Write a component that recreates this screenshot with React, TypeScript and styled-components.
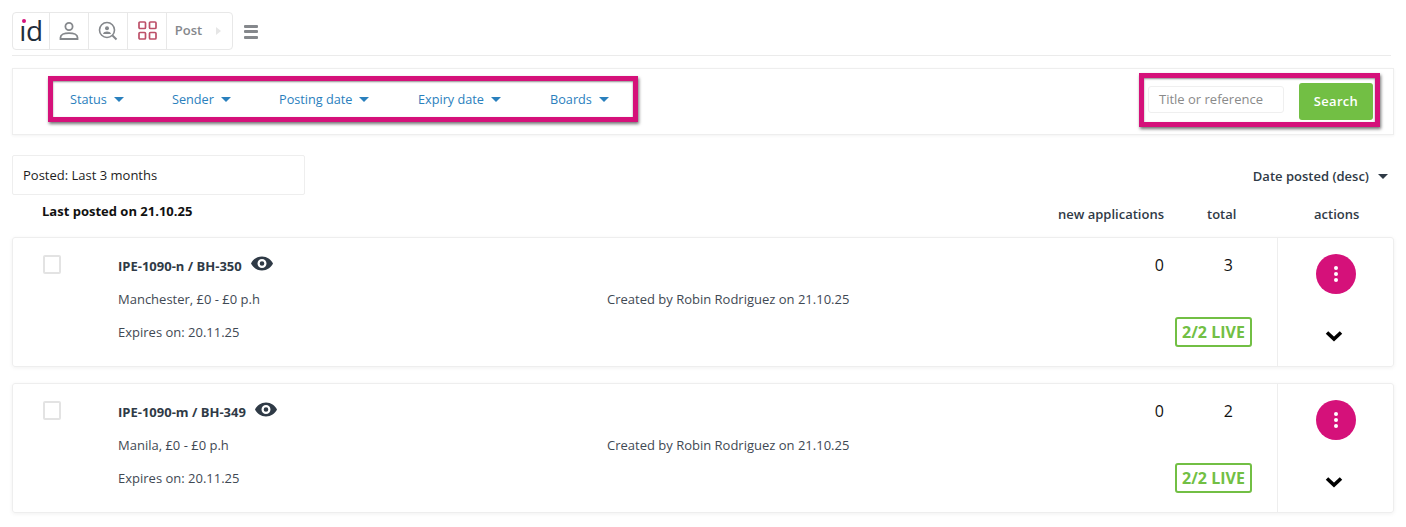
import React from "react";
import styled, { createGlobalStyle } from "styled-components";

const Global = createGlobalStyle`
  html, body { margin: 0; padding: 0; background: #fff; }
  body { font-family: "Open Sans", "Liberation Sans", sans-serif; color: #2f3a46; }
  * { box-sizing: border-box; }
`;

const Page = styled.div`
  width: 1406px;
  height: 527px;
  overflow: hidden;
  padding: 12px 12px 0 12px;
`;

const TopBar = styled.div`
  display: flex;
  align-items: center;
  height: 44px;
  padding-bottom: 6px;
  border-bottom: 1px solid #ebebeb;
  margin-right: 3px;
`;

const Tools = styled.div`
  display: flex;
  height: 38px;
  width: 221px;
  border: 1px solid #e8e8e8;
  border-radius: 4px;
`;

const Tool = styled.div<{ $w: number; $last?: boolean }>`
  position: relative;
  width: ${(p) => p.$w}px;
  display: flex;
  align-items: center;
  justify-content: center;
  border-right: ${(p) => (p.$last ? "none" : "1px solid #e8e8e8")};
`;

const Logo = styled.span`
  font-size: 28px;
  font-weight: 500;
  letter-spacing: -0.3px;
  line-height: 1;
  color: #1f2d3a;
  margin-top: -2px;
`;

const LogoDot = styled.i`
  position: absolute;
  left: 9px;
  top: 6px;
  width: 4px;
  height: 4px;
  border-radius: 50%;
  background: #d5117a;
`;

const PostLabel = styled.span`
  font-size: 13px;
  font-weight: 600;
  color: #85888c;
  margin-right: 22px;
  margin-top: -1px;
`;

const Caret = styled.i`
  position: absolute;
  right: 11px;
  top: 14px;
  border-left: 5px solid #e6e6e6;
  border-top: 4px solid transparent;
  border-bottom: 4px solid transparent;
`;

const Hamburger = styled.div`
  width: 14px;
  height: 14px;
  margin: 2px 0 0 11px;
  display: flex;
  flex-direction: column;
  justify-content: space-between;
  i {
    display: block;
    height: 3px;
    background: #85888c;
    border-radius: 1px;
  }
`;

const FilterPanel = styled.div`
  display: flex;
  align-items: center;
  justify-content: space-between;
  height: 67px;
  margin-top: 12px;
  padding: 0 13px 0 35px;
  border: 1px solid #eeeeee;
  box-shadow: 0 1px 3px rgba(0, 0, 0, 0.05);
`;

const Marked = styled.div`
  display: flex;
  align-items: center;
  border: 5px solid #d5117a;
  box-shadow: 1px 2px 3px rgba(0, 0, 0, 0.55), inset 0 1px 2px rgba(0, 0, 0, 0.45);
  background: #fff;
`;

const FilterBox = styled(Marked)`
  width: 590px;
  height: 46px;
  margin-top: -6px;
  padding: 1px 0 0 17px;
`;

const Filter = styled.div<{ $w: number }>`
  flex: none;
  width: ${(p) => p.$w}px;
  display: flex;
  align-items: center;
  gap: 7px;
  font-size: 12.7px;
  color: #2a80bd;
`;

const BlueArrow = styled.i`
  border-top: 5px solid #2a80bd;
  border-left: 5.5px solid transparent;
  border-right: 5.5px solid transparent;
  margin-top: 1px;
`;

const SearchBox = styled(Marked)`
  width: 241px;
  height: 54px;
  margin-top: -3px;
  padding-left: 4px;
`;

const SearchInput = styled.div`
  width: 136px;
  height: 27px;
  border: 1px solid #efefef;
  border-radius: 3px;
  padding-left: 10px;
  font-size: 13px;
  line-height: 25px;
  color: #8a8a8a;
  margin-top: -1px;
`;

const SearchButton = styled.div`
  width: 74px;
  height: 37px;
  margin: 2px 0 0 15px;
  background: #72bf44;
  border-radius: 3px;
  color: #fff;
  font-size: 13px;
  font-weight: 600;
  letter-spacing: 0.3px;
  display: flex;
  align-items: center;
  justify-content: center;
`;

const SortRow = styled.div`
  display: flex;
  justify-content: space-between;
  align-items: flex-end;
  margin-top: 20px;
`;

const PostedBox = styled.div`
  width: 293px;
  height: 40px;
  border: 1px solid #eeeeee;
  border-radius: 2px;
  padding-left: 10px;
  font-size: 13px;
  line-height: 38px;
  color: #1d1d1d;
`;

const Sort = styled.div`
  display: flex;
  align-items: center;
  gap: 9px;
  font-size: 13px;
  font-weight: 600;
  padding: 0 6px 10px 0;
`;

const DarkArrow = styled.i`
  border-top: 5px solid #2f3a46;
  border-left: 5.5px solid transparent;
  border-right: 5.5px solid transparent;
`;

const HeadRow = styled.div`
  display: flex;
  align-items: flex-start;
  height: 42px;
  padding: 7px 0 0 30px;
`;

const LastPosted = styled.div`
  flex: 1;
  font-size: 13px;
  font-weight: 700;
  color: #111;
  line-height: 18px;
`;

const HeadCell = styled.div<{ $w: number }>`
  flex: none;
  width: ${(p) => p.$w}px;
  font-size: 13px;
  font-weight: 600;
  line-height: 18px;
  margin-top: 3px;
  white-space: nowrap;
`;

const Card = styled.div`
  display: flex;
  height: 130px;
  margin-bottom: 16px;
  border: 1px solid #eeeeee;
  border-radius: 3px;
  box-shadow: 0 1px 4px rgba(0, 0, 0, 0.06);
`;

const CheckCol = styled.div`
  width: 105px;
  padding: 17px 0 0 30px;
`;

const Check = styled.div`
  width: 18px;
  height: 19px;
  border: 2px solid #e3e3e3;
  border-radius: 2px;
`;

const InfoCol = styled.div`
  width: 489px;
  padding-top: 18px;
  display: flex;
  flex-direction: column;
  gap: 13px;
`;

const TitleLine = styled.div`
  height: 20px;
  display: flex;
  align-items: center;
  gap: 9px;
  font-size: 13px;
  font-weight: 700;
  color: #2f3a46;
`;

const Line = styled.div`
  height: 20px;
  font-size: 13px;
  line-height: 20px;
  color: #3f4954;
`;

const CreatedCol = styled.div`
  flex: 1;
  padding-top: 51px;
`;

const StatsCol = styled.div`
  width: 200px;
  display: flex;
  flex-direction: column;
  align-items: flex-end;
  justify-content: space-between;
  padding: 16px 25px 19px 0;
`;

const Numbers = styled.div`
  display: flex;
  width: 100%;
  font-size: 16px;
  line-height: 22px;
  color: #111;
`;

const Count = styled.div<{ $w: number }>`
  width: ${(p) => p.$w}px;
  text-align: right;
`;

const Live = styled.div`
  width: 77px;
  height: 30px;
  border: 2px solid #72bf44;
  border-radius: 3px;
  color: #72bf44;
  font-size: 16px;
  font-weight: 700;
  line-height: 26px;
  text-align: center;
  white-space: nowrap;
`;

const ActionsCol = styled.div`
  width: 116px;
  border-left: 1px solid #eeeeee;
  padding: 16px 0 0 38px;
`;

const Round = styled.div`
  width: 40px;
  height: 40px;
  border-radius: 50%;
  background: #d5117a;
  display: flex;
  flex-direction: column;
  align-items: center;
  justify-content: center;
  gap: 2px;
  i {
    width: 4px;
    height: 4px;
    border-radius: 50%;
    background: #fff;
  }
`;

const Chevron = styled.svg`
  display: block;
  width: 18px;
  height: 12px;
  margin: 36px 0 0 9px;
`;

const EyeIcon = () => (
  <svg width="22" height="15" viewBox="0 0 22 15" style={{ marginTop: -5 }}>
    <path
      fill="#2f3a46"
      fillRule="evenodd"
      d="M11 .5C6 .5 2 3.500 0 7.500c2 4 6 7 11 7s9-3 11-7c-2-4-6-7-11-7zM11 12a4.500 4.500 0 1 1 0-9 4.500 4.500 0 0 1 0 9zm0-2.200a2.300 2.300 0 1 0 0-4.600 2.300 2.300 0 0 0 0 4.600z"
    />
  </svg>
);

const rows = [
  { title: "IPE-1090-n / BH-350", loc: "Manchester, £0 - £0 p.h", total: 3 },
  { title: "IPE-1090-m / BH-349", loc: "Manila, £0 - £0 p.h", total: 2 },
];

const filters: [string, number][] = [
  ["Status", 102],
  ["Sender", 107],
  ["Posting date", 139],
  ["Expiry date", 132],
  ["Boards", 90],
];

export default function App() {
  return (
    <Page>
      <Global />
      <TopBar>
        <Tools>
          <Tool $w={37}>
            <Logo>ıd</Logo>
            <LogoDot />
          </Tool>
          <Tool $w={39}>
            <svg width="20" height="20" viewBox="0 0 20 20" fill="none" stroke="#85888c" strokeWidth="1.800">
              <circle cx="10" cy="5.500" r="3.600" />
              <path d="M1.500 18v-1.500c0-2.500 3.500-4.300 8.500-4.300s8.500 1.800 8.500 4.300V18z" />
            </svg>
          </Tool>
          <Tool $w={39}>
            <svg width="20" height="20" viewBox="0 0 20 20" fill="none" stroke="#85888c" strokeWidth="1.600">
              <circle cx="9" cy="9" r="7.500" />
              <path d="M14.500 14.500 18.500 18.500" strokeWidth="2" />
              <circle cx="9" cy="7.300" r="2" fill="#85888c" stroke="none" />
              <path d="M5 13c.5-1.800 2-2.500 4-2.500s3.500.7 4 2.500z" fill="#85888c" stroke="none" />
            </svg>
          </Tool>
          <Tool $w={39}>
            <svg width="19" height="19" viewBox="0 0 19 19" fill="none" stroke="#bd5069" strokeWidth="1.700">
              <rect x="1" y="1" width="6.500" height="6.500" rx="1" />
              <rect x="11.500" y="1" width="6.500" height="6.500" rx="1" />
              <rect x="1" y="11.500" width="6.500" height="6.500" rx="1" />
              <rect x="11.500" y="11.500" width="6.500" height="6.500" rx="1" />
            </svg>
          </Tool>
          <Tool $w={65} $last>
            <PostLabel>Post</PostLabel>
            <Caret />
          </Tool>
        </Tools>
        <Hamburger>
          <i />
          <i />
          <i />
        </Hamburger>
      </TopBar>

      <FilterPanel>
        <FilterBox>
          {filters.map(([label, w]) => (
            <Filter key={label} $w={w}>
              {label}
              <BlueArrow />
            </Filter>
          ))}
        </FilterBox>
        <SearchBox>
          <SearchInput>Title or reference</SearchInput>
          <SearchButton>Search</SearchButton>
        </SearchBox>
      </FilterPanel>

      <SortRow>
        <PostedBox>Posted: Last 3 months</PostedBox>
        <Sort>
          Date posted (desc)
          <DarkArrow />
        </Sort>
      </SortRow>

      <HeadRow>
        <LastPosted>Last posted on 21.10.25</LastPosted>
        <HeadCell $w={149}>new applications</HeadCell>
        <HeadCell $w={107}>total</HeadCell>
        <HeadCell $w={80}>actions</HeadCell>
      </HeadRow>

      {rows.map((r) => (
        <Card key={r.title}>
          <CheckCol>
            <Check />
          </CheckCol>
          <InfoCol>
            <TitleLine>
              {r.title}
              <EyeIcon />
            </TitleLine>
            <Line>{r.loc}</Line>
            <Line>Expires on: 20.11.25</Line>
          </InfoCol>
          <CreatedCol>
            <Line>Created by Robin Rodriguez on 21.10.25</Line>
          </CreatedCol>
          <StatsCol>
            <Numbers>
              <Count $w={87}>0</Count>
              <Count $w={69}>{r.total}</Count>
            </Numbers>
            <Live>2/2 LIVE</Live>
          </StatsCol>
          <ActionsCol>
            <Round>
              <i />
              <i />
              <i />
            </Round>
            <Chevron viewBox="0 0 18 12" fill="none" stroke="#000" strokeWidth="3.600">
              <path d="M2 2.500 9 9l7-6.500" />
            </Chevron>
          </ActionsCol>
        </Card>
      ))}
    </Page>
  );
}
